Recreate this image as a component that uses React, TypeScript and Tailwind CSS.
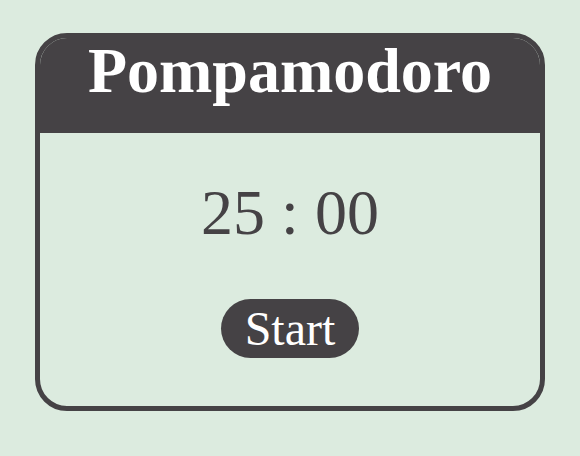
export default function App() {
  return (
    <div className="min-h-[456px] w-full bg-[#dcebdf] pt-[33px]" style={{ fontFamily: '"Liberation Serif", "Times New Roman", serif' }}>
      <div className="mx-auto flex h-[378px] w-[510px] flex-col items-center overflow-hidden rounded-[32px] border-[5px] border-[#454245]">
        <div className="flex w-full justify-center bg-[#454245] pb-[29px]">
          <h1 className="text-[64px] font-bold leading-[66px] text-white">Pompamodoro</h1>
        </div>
        <div className="mt-[48px] text-[64px] leading-none text-[#454245]">25 : 00</div>
        <button className="mt-[54px] flex h-[59px] items-center rounded-full bg-[#454245] px-6 text-[48px] text-white">
          Start
        </button>
      </div>
    </div>
  );
}
